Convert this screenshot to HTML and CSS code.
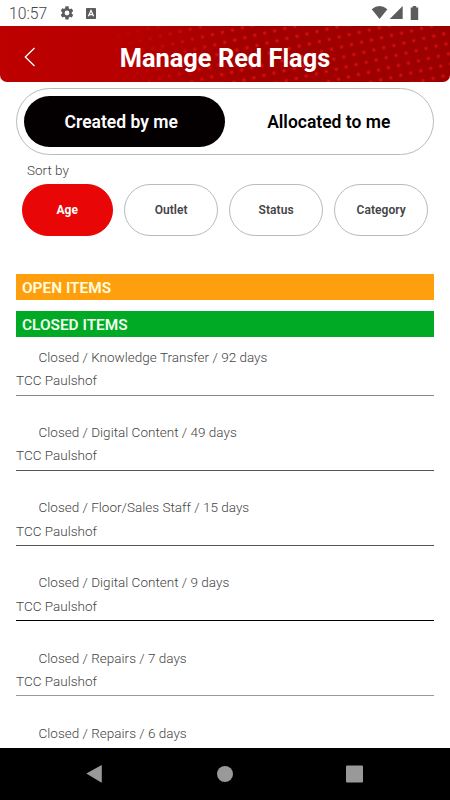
FILE: index.html
```html
<!DOCTYPE html>
<html lang="en">
<head>
<meta charset="utf-8">
<title>Manage Red Flags</title>
<link rel="stylesheet" href="styles.css">
</head>
<body>
<div class="status">
  <span class="clock">10:57</span>
  <svg class="gear" width="16" height="16" viewBox="0 0 24 24"><path fill="#5c5c5c" d="M19.14 12.94c.04-.3.06-.61.06-.94s-.02-.64-.07-.94l2.03-1.58a.49.49 0 0 0 .12-.61l-1.92-3.32a.49.49 0 0 0-.59-.22l-2.39.96a7 7 0 0 0-1.62-.94l-.36-2.54A.48.48 0 0 0 13.92 2h-3.84a.48.48 0 0 0-.47.41l-.36 2.54a7 7 0 0 0-1.62.94l-2.39-.96a.48.48 0 0 0-.59.22L2.73 8.47a.48.48 0 0 0 .12.61l2.03 1.58a7 7 0 0 0 0 1.880l-2.03 1.980a.49.49 0 0 0-.12.61l1.92 3.32c.12.22.37.29.59.22l2.39-.96c.5.38 1.03.7 1.62.94l.36 2.54c.05.24.24.41.48.41h3.84c.24 0 .44-.17.47-.41l.36-2.54a7 7 0 0 0 1.62-.94l2.39.96c.22.08.47 0 .59-.22l1.92-3.32a.48.48 0 0 0-.12-.61zM12 15.6a3.6 3.6 0 1 1 0-7.2 3.6 3.6 0 0 1 0 7.2z"/></svg>
  <svg class="abox" width="10" height="11" viewBox="0 0 10 11"><rect width="10" height="11" rx=".8" fill="#5c5c5c"/><path d="M2.4 8.3 5 2.5l2.6 5.8M3.4 6.6h3.2" fill="none" stroke="#fff" stroke-width="1.3"/></svg>
  <svg class="signals" width="50" height="16" viewBox="0 0 50 16"><g fill="#5c5c5c"><path d="M.7 3.2Q8.500-3 16.400 3.200L8.600 13z"/><path d="M31.700 0v13H18.700z"/><path d="M39.700 1.400h2V0h3.500v1.400h2V14h-7.500z"/></g></svg>
</div>
<header class="bar">
  <svg class="dots" width="450" height="56" viewBox="0 0 450 56">
    <defs>
      <radialGradient id="spot"><stop offset="0" stop-color="#f01818"/><stop offset=".45" stop-color="#e81414" stop-opacity=".75"/><stop offset="1" stop-color="#d01010" stop-opacity="0"/></radialGradient>
      <pattern id="dot" width="14.500" height="14.500" patternUnits="userSpaceOnUse" patternTransform="rotate(32)"><circle cx="3.500" cy="3.500" r="2.600" fill="url(#spot)"/><circle cx="10.750" cy="10.750" r="2.600" fill="url(#spot)"/></pattern>
      <linearGradient id="fade"><stop offset=".22" stop-color="#000"/><stop offset=".5" stop-color="#ccc"/><stop offset="1" stop-color="#bbb"/></linearGradient>
      <mask id="m"><rect width="450" height="56" fill="url(#fade)"/></mask>
    </defs>
    <rect width="450" height="56" fill="url(#dot)" mask="url(#m)"/>
  </svg>
  <svg class="back" width="12" height="20" viewBox="0 0 12 20"><path d="M10.500 1 1.300 10l9.200 9" fill="none" stroke="#fff" stroke-width="1.300"/></svg>
  <h1>Manage Red Flags</h1>
</header>
<main>
  <div class="tabs"><div class="tab on"><span>Created by me</span></div><div class="tab"><span>Allocated to me</span></div></div>
  <div class="sort">Sort by</div>
  <div class="chips"><div class="chip on">Age</div><div class="chip">Outlet</div><div class="chip">Status</div><div class="chip">Category</div></div>
  <h2 class="open">OPEN ITEMS</h2>
  <h2 class="closed">CLOSED ITEMS</h2>
  <div class="item l1"><p class="what">Closed / Knowledge Transfer / 92 days</p><p>TCC Paulshof</p></div>
  <div class="item l2"><p class="what">Closed / Digital Content / 49 days</p><p>TCC Paulshof</p></div>
  <div class="item l3"><p class="what">Closed / Floor/Sales Staff / 15 days</p><p>TCC Paulshof</p></div>
  <div class="item l4"><p class="what">Closed / Digital Content / 9 days</p><p>TCC Paulshof</p></div>
  <div class="item l5"><p class="what">Closed / Repairs / 7 days</p><p>TCC Paulshof</p></div>
  <div class="item"><p class="what">Closed / Repairs / 6 days</p></div>
</main>
<nav>
  <svg width="450" height="52" viewBox="0 0 450 52"><g fill="#999"><path d="M86.300 25.600 101.200 17.200q.6-.2.600.5v16.200q0 .7-.6.500z"/><circle cx="225" cy="26" r="8"/><rect x="346" y="17.500" width="17" height="17" rx="1"/></g></svg>
</nav>
</body>
</html>
```

FILE: styles.css
```css
* { box-sizing: border-box; }
body { margin: 0; width: 450px; height: 800px; overflow: hidden; display: flex; flex-direction: column; background: #fff; font-family: Roboto, sans-serif; color: #444; }
h1, h2, p { margin: 0; }
svg { display: block; flex: none; }
.status { height: 26px; flex: none; display: flex; align-items: flex-start; padding-left: 9px; }
.clock { font-size: 15.7px; line-height: 18px; padding-top: 5px; width: 50px; font-weight: 360; }
.gear { margin-top: 5px; }
.abox { margin: 8px 0 0 11px; }
.signals { margin: 6px 0 0 275px; }
.bar { height: 56px; flex: none; display: flex; align-items: center; position: relative; overflow: hidden; border-radius: 0 0 7px 7px; background: linear-gradient(90deg, #bd0000, #b80000 25%, #a20000 55%, #9b0000); }
.dots { position: absolute; left: 0; top: 0; }
.back { position: relative; margin: 5px 0 0 24px; }
h1 { position: relative; flex: 1; padding: 7px 36px 0 0; text-align: center; font-size: 25.4px; line-height: 30px; font-weight: 700; color: #fff; }
main { flex: 1; min-height: 0; overflow: hidden; padding: 6px 16px 0; }
.tabs { height: 67px; border: 1px solid #bbb; border-radius: 34px; display: flex; padding: 7px; }
.tab { flex: 1; display: flex; align-items: center; justify-content: center; padding: 0 0 0 7px; font-size: 17.5px; font-weight: 650; color: #000; border-radius: 26px; }
.tab.on { padding: 0 6px 0 0; background: #040002; color: #fff; }
.sort { margin: 6px 0 0 11px; height: 18px; font-size: 13.5px; line-height: 19px; font-weight: 360; }
.chips { display: flex; gap: 11.3px; margin: 4.500px 6px 0 5.500px; height: 52px; }
.chip { flex: 1; border: 1px solid #bbb; border-radius: 27px; display: flex; align-items: center; justify-content: center; font-size: 12px; font-weight: 600; letter-spacing: .06px; }
.chip.on { flex: 0 0 91.5px; background: #e80606; border-color: #e80606; color: #fff; font-weight: 700; }
h2 { height: 26px; padding: 1px 6px 0; font-size: 15.4px; line-height: 26px; font-weight: 650; color: #ffffe0; }
.open { margin-top: 38.5px; background: #ff9f0d; }
.closed { margin-top: 11px; background: #00aa25; color: #effff0; }
.item { height: 75.2px; padding-top: 24.6px; border-bottom: 1px solid #555; font-size: 13.5px; line-height: 24px; font-weight: 360; letter-spacing: .01px; }
.item .what { padding-left: 22.5px; height: 23.4px; }
.l1 { height: 58.5px; padding-top: 8px; border-color: #888; }
.l4 { border-color: #000; }
.l5 { border-color: #999; }
nav { height: 52px; flex: none; background: #000; }
```
